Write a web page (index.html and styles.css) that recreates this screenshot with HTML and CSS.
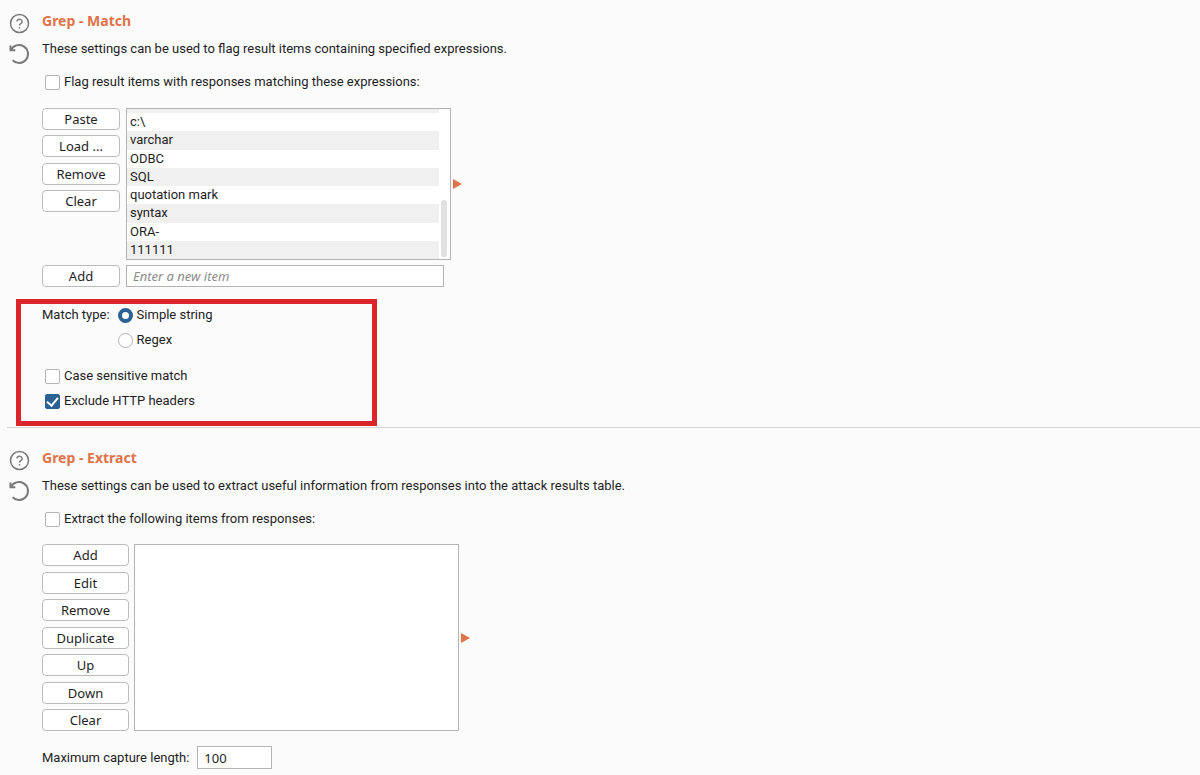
FILE: index.html
```html
<!DOCTYPE html>
<html lang="en">
  <head>
    <meta charset="UTF-8" />
    <meta name="viewport" content="width=device-width, initial-scale=1.0" />
    <title>Grep settings</title>
    <link rel="stylesheet" href="styles.css">
  </head>
  <body>
    <section class="panel">
      <div class="tools">
        <button class="icon" aria-label="Help">
          <svg viewBox="0 0 20 20">
            <circle cx="10.5" cy="10.5" r="9" />
            <path d="M7.9 8.6a2.6 2.4 0 1 1 3.9 2.1c-.9.5-1.3.9-1.3 1.8" />
            <path d="M10.5 14.1v1.4" />
          </svg>
        </button>
        <button class="icon" aria-label="Restore defaults">
          <svg viewBox="0 0 20 20">
            <path d="M1.5 1.5v4.800h4.800" />
            <path d="M1.8 6.3A9 9 0 1 1 3.6 16.300" />
          </svg>
        </button>
      </div>
      <div class="content">
        <h2>Grep - Match</h2>
        <p>These settings can be used to flag result items containing specified expressions.</p>
        <label class="check"><input type="checkbox" />Flag result items with responses matching these expressions:</label>

        <div class="editor">
          <div class="btns short">
            <button>Paste</button>
            <button>Load ...</button>
            <button>Remove</button>
            <button>Clear</button>
          </div>
          <div class="list">
            <ul>
              <li class="cut"></li>
              <li>c:\</li>
              <li>varchar</li>
              <li>ODBC</li>
              <li>SQL</li>
              <li>quotation mark</li>
              <li>syntax</li>
              <li>ORA-</li>
              <li>111111</li>
            </ul>
            <div class="scroll"><span></span></div>
          </div>
          <span class="arrow"></span>
        </div>
        <div class="new-item">
          <button>Add</button>
          <input type="text" placeholder="Enter a new item" aria-label="New item" />
        </div>

        <div class="options">
          <div class="match-type">
            <span>Match type:</span>
            <div class="radios">
              <label><input type="radio" name="type" checked />Simple string</label>
              <label><input type="radio" name="type" />Regex</label>
            </div>
          </div>
          <div class="flags">
            <label class="check"><input type="checkbox" />Case sensitive match</label>
            <label class="check"><input type="checkbox" checked />Exclude HTTP headers</label>
          </div>
        </div>
      </div>
    </section>

    <hr />

    <section class="panel">
      <div class="tools">
        <button class="icon" aria-label="Help">
          <svg viewBox="0 0 20 20">
            <circle cx="10.5" cy="10.5" r="9" />
            <path d="M7.9 8.6a2.6 2.4 0 1 1 3.9 2.1c-.9.5-1.3.9-1.3 1.8" />
            <path d="M10.5 14.1v1.4" />
          </svg>
        </button>
        <button class="icon" aria-label="Restore defaults">
          <svg viewBox="0 0 20 20">
            <path d="M1.5 1.5v4.800h4.800" />
            <path d="M1.8 6.3A9 9 0 1 1 3.6 16.300" />
          </svg>
        </button>
      </div>
      <div class="content">
        <h2>Grep - Extract</h2>
        <p>These settings can be used to extract useful information from responses into the attack results table.</p>
        <label class="check"><input type="checkbox" />Extract the following items from responses:</label>

        <div class="editor extract">
          <div class="btns">
            <button>Add</button>
            <button>Edit</button>
            <button>Remove</button>
            <button>Duplicate</button>
            <button>Up</button>
            <button>Down</button>
            <button>Clear</button>
          </div>
          <div class="list"></div>
          <span class="arrow"></span>
        </div>
        <div class="length">
          <label for="len">Maximum capture length:</label>
          <input type="text" id="len" value="100" />
        </div>
      </div>
    </section>
  </body>
</html>
```
FILE: styles.css
```css
* {
  padding: 0;
  margin: 0;
  box-sizing: border-box;
}
body {
  background: #fbfbfb;
  color: #1e1e1e;
  font-family: Roboto, sans-serif;
  font-size: 13px;
  line-height: 20px;
}
button,
input {
  font: 13px "Noto Sans", sans-serif;
  color: inherit;
}
.panel {
  display: flex;
  gap: 13px;
  padding: 11px 9px 0;
}
.tools {
  display: flex;
  flex-direction: column;
  gap: 11px;
  padding-top: 2px;
}
.icon {
  width: 20px;
  height: 20px;
  border: none;
  background: none;
}
.icon svg {
  display: block;
  overflow: visible;
  fill: none;
  stroke: #7a7a7a;
  stroke-width: 2;
}
.icon circle,
.icon circle ~ path {
  stroke-width: 1.5;
}
.content {
  flex: 1;
}
h2 {
  font-family: "Noto Sans", sans-serif;
  font-size: 14px;
  line-height: 20px;
  color: #e07348;
}
p {
  margin: 8px 0 13px;
}
label {
  display: flex;
  align-items: center;
}
.check {
  gap: 4px;
  padding-left: 3px;
}
input[type="checkbox"],
input[type="radio"] {
  appearance: none;
  display: flex;
  align-items: center;
  justify-content: center;
  width: 15px;
  height: 15px;
  border: 1px solid #b4b4b4;
  border-radius: 2px;
  background: #fff;
}
input[type="checkbox"]:checked {
  background: #2b6193;
  border-color: #2b6193;
}
input[type="checkbox"]:checked::after {
  content: "";
  width: 5px;
  height: 9px;
  margin-bottom: 2px;
  border: solid #fff;
  border-width: 0 2px 2px 0;
  transform: rotate(40deg);
}
input[type="radio"] {
  border-radius: 50%;
}
input[type="radio"]:checked {
  border: 4px solid #2b6193;
}

.editor {
  display: flex;
  height: 152px;
  margin-top: 16px;
}
.btns {
  display: flex;
  flex-direction: column;
  justify-content: space-between;
  width: 78px;
  margin-right: 6px;
}
.short {
  margin-bottom: 48px;
}
.btns button,
.new-item button {
  height: 22px;
  line-height: 20px;
  border: 1px solid #bcbcbc;
  border-radius: 4px;
  background: #fff;
}
.list {
  display: flex;
  width: 325px;
  border: 1px solid #b4b4b4;
  background: #fff;
}
ul {
  display: flex;
  flex-direction: column;
  flex: 1;
  list-style: none;
}
li {
  flex: 1;
  padding-left: 3px;
  line-height: 18px;
}
li:nth-child(odd) {
  background: #f0f0f0;
}
.cut {
  flex: 0 0 4px;
}
.scroll {
  display: flex;
  align-items: flex-end;
  width: 11px;
  padding: 2px;
}
.scroll span {
  width: 6px;
  height: 57px;
  border-radius: 3px;
  background: #e1e1e1;
}
.arrow {
  align-self: center;
  margin-left: 2px;
  border: solid transparent;
  border-width: 5px 0 5px 9px;
  border-left-color: #e07348;
}
.new-item {
  display: flex;
  gap: 6px;
  margin-top: 5px;
}
.new-item button {
  width: 78px;
}
input[type="text"] {
  width: 318px;
  height: 22px;
  padding: 0 6px;
  border: 1px solid #b4b4b4;
  background: #fff;
}
input::placeholder {
  color: #8c8c8c;
  font-style: italic;
}

/* red frame round the match options */
.options {
  position: relative;
  margin-top: 18px;
  padding-bottom: 16px;
}
.options::after {
  content: "";
  position: absolute;
  top: -6px;
  bottom: 1px;
  left: -26px;
  width: 361px;
  box-sizing: border-box;
  border: 5px solid #dc242c;
  pointer-events: none;
}
.match-type {
  display: flex;
  gap: 8px;
}
.radios,
.flags {
  display: flex;
  flex-direction: column;
  gap: 5px;
}
.radios label {
  gap: 4px;
}
.flags {
  margin-top: 16px;
}

hr {
  margin-left: 7px;
  border: none;
  border-top: 1px solid #d6d6d6;
}
hr + .panel {
  padding-top: 20px;
}
.extract {
  height: 187px;
  margin-top: 15px;
}
.extract .btns {
  width: 87px;
  margin-right: 5px;
}
.length {
  display: flex;
  gap: 8px;
  margin-top: 15px;
}
.length input[type="text"] {
  width: 75px;
  height: 23px;
}
```
